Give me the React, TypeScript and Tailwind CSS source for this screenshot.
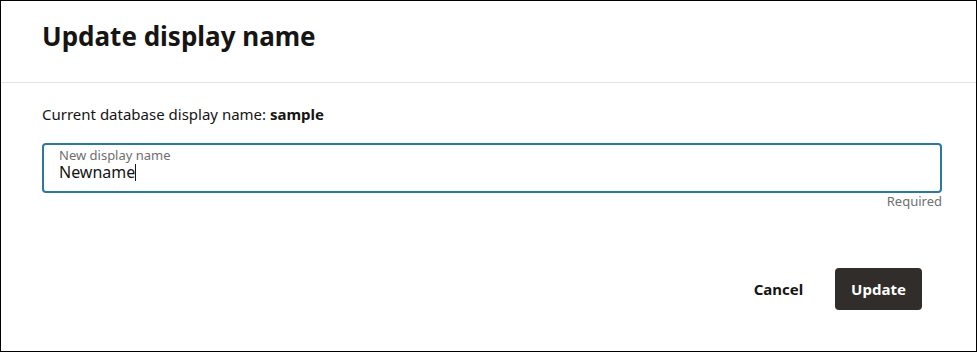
import React from "react";

export default function App() {
  return (
    <div className="w-[977px] h-[352px] border border-black bg-white flex flex-col font-['Noto_Sans',sans-serif] text-[#161513]">
      <div className="h-[82px] shrink-0 border-b border-[#e2e2e2] pl-[41px] pt-[19px]">
        <h1 className="text-[26px] leading-[32px] font-bold">Update display name</h1>
      </div>
      <div className="pl-[41px] pr-[34px] pt-[21px] flex flex-col">
        <p className="text-[15px] leading-[20px]">
          Current database display name: <span className="font-bold">sample</span>
        </p>
        <div className="mt-[19px] h-[50px] border-2 border-[#2b7a9c] rounded-[4px] px-[15px] pt-[3px]">
          <div className="text-[13px] leading-[15px] text-[#6f6f6f]">New display name</div>
          <div className="text-[16px] leading-[18px] flex items-center">
            <span>Newname</span>
            <span className="inline-block w-px h-[17px] bg-[#161513]" />
          </div>
        </div>
        <div className="text-[13px] leading-[16px] text-[#6f6f6f] text-right">Required</div>
      </div>
      <div className="mt-[59px] flex justify-end gap-[13px] pr-[54px]">
        <button className="w-[87px] h-[42px] rounded-[4px] text-[15px] font-bold text-[#161513]">Cancel</button>
        <button className="w-[87px] h-[42px] rounded-[4px] bg-[#312d2a] text-[15px] font-bold text-white">Update</button>
      </div>
    </div>
  );
}
